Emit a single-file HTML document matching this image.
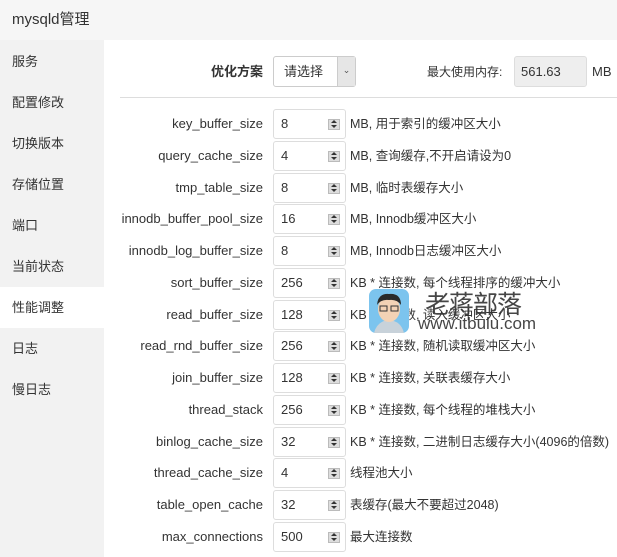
<!DOCTYPE html>
<html><head><meta charset="utf-8"><style>
*{margin:0;padding:0;box-sizing:border-box}
body{width:617px;height:557px;overflow:hidden;background:#fff;font-family:"Liberation Sans","Noto Sans CJK SC",sans-serif;color:#333;position:relative;line-height:16px}
.hdr{position:absolute;left:0;top:0;width:617px;height:40px;background:#f6f6f6;font-size:15px;padding:11px 0 0 12px;color:#333;line-height:18px}
.side{position:absolute;left:0;top:40px;width:104px;height:517px;background:#f2f2f2}
.side div{position:absolute;left:12px;font-size:13px;color:#333}
.act{position:absolute;left:0;top:287px;width:104px;height:41px;background:#fff}
.lbl{position:absolute;right:354px;font-size:13px;color:#333;white-space:nowrap;height:16px;line-height:16px}
.inp{position:absolute;left:273px;width:73px;height:30px;border:1px solid #ddd;border-radius:3px;background:#fff;font-size:13px;padding:0 0 0 7px;line-height:28px}
.sp{position:absolute;right:5px;top:9px;width:12px;height:11px;background:#ddd;border:1px solid #bbb}
.sp:before{content:"";position:absolute;left:2px;top:0px;border:3px solid transparent;border-bottom:3px solid #333;border-top:0}
.sp:after{content:"";position:absolute;left:2px;top:5px;border:3px solid transparent;border-top:3px solid #333;border-bottom:0}
.d{position:absolute;left:350px;font-size:12.5px;color:#333;white-space:nowrap;height:16px;line-height:16px}
</style></head><body>
<div class="hdr">mysqld管理</div>
<div class="side">
<div style="top:14px">服务</div>
<div style="top:55px">配置修改</div>
<div style="top:96px">切换版本</div>
<div style="top:137px">存储位置</div>
<div style="top:178px">端口</div>
<div style="top:219px">当前状态</div>
</div>
<div class="act"></div>
<div style="position:absolute;left:12px;top:300px;font-size:13px">性能调整</div>
<div style="position:absolute;left:12px;top:341px;font-size:13px">日志</div>
<div style="position:absolute;left:12px;top:382px;font-size:13px">慢日志</div>

<div class="lbl" style="top:64px;font-weight:bold">优化方案</div>
<div style="position:absolute;left:273px;top:56px;width:83px;height:31px;border:1px solid #ccc;border-radius:3px;font-size:13px;padding:0 0 0 10px;line-height:29px;background:#fff">请选择
<div style="position:absolute;right:0;top:0;width:18px;height:29px;background:#e6e6e6;border-left:1px solid #ccc;font-size:9px;text-align:center;line-height:26px;color:#555">&#8964;</div></div>
<div style="position:absolute;left:427px;top:64px;font-size:12px">最大使用内存:</div>
<div style="position:absolute;left:514px;top:56px;width:73px;height:31px;border:1px solid #ddd;border-radius:3px;background:#eee;font-size:13px;padding:0 0 0 6px;line-height:29px">561.63</div>
<div style="position:absolute;left:592px;top:64px;font-size:13px">MB</div>
<div style="position:absolute;left:120px;top:97px;width:497px;height:1px;background:#ddd"></div>

<div class="lbl" style="top:116px">key_buffer_size</div><div class="inp" style="top:109px">8<div class="sp"></div></div><div class="d" style="top:116px">MB, 用于索引的缓冲区大小</div>
<div class="lbl" style="top:148px">query_cache_size</div><div class="inp" style="top:141px">4<div class="sp"></div></div><div class="d" style="top:148px">MB, 查询缓存,不开启请设为0</div>
<div class="lbl" style="top:180px">tmp_table_size</div><div class="inp" style="top:173px">8<div class="sp"></div></div><div class="d" style="top:180px">MB, 临时表缓存大小</div>
<div class="lbl" style="top:211px">innodb_buffer_pool_size</div><div class="inp" style="top:204px">16<div class="sp"></div></div><div class="d" style="top:211px">MB, Innodb缓冲区大小</div>
<div class="lbl" style="top:243px">innodb_log_buffer_size</div><div class="inp" style="top:236px">8<div class="sp"></div></div><div class="d" style="top:243px">MB, Innodb日志缓冲区大小</div>
<div class="lbl" style="top:275px">sort_buffer_size</div><div class="inp" style="top:268px">256<div class="sp"></div></div><div class="d" style="top:275px">KB * 连接数, 每个线程排序的缓冲大小</div>
<div class="lbl" style="top:307px">read_buffer_size</div><div class="inp" style="top:300px">128<div class="sp"></div></div><div class="d" style="top:307px">KB * 连接数, 读入缓冲区大小</div>
<div class="lbl" style="top:338px">read_rnd_buffer_size</div><div class="inp" style="top:331px">256<div class="sp"></div></div><div class="d" style="top:338px">KB * 连接数, 随机读取缓冲区大小</div>
<div class="lbl" style="top:370px">join_buffer_size</div><div class="inp" style="top:363px">128<div class="sp"></div></div><div class="d" style="top:370px">KB * 连接数, 关联表缓存大小</div>
<div class="lbl" style="top:402px">thread_stack</div><div class="inp" style="top:395px">256<div class="sp"></div></div><div class="d" style="top:402px">KB * 连接数, 每个线程的堆栈大小</div>
<div class="lbl" style="top:434px">binlog_cache_size</div><div class="inp" style="top:427px">32<div class="sp"></div></div><div class="d" style="top:434px">KB * 连接数, 二进制日志缓存大小(4096的倍数)</div>
<div class="lbl" style="top:465px">thread_cache_size</div><div class="inp" style="top:458px">4<div class="sp"></div></div><div class="d" style="top:465px">线程池大小</div>
<div class="lbl" style="top:497px">table_open_cache</div><div class="inp" style="top:490px">32<div class="sp"></div></div><div class="d" style="top:497px">表缓存(最大不要超过2048)</div>
<div class="lbl" style="top:529px">max_connections</div><div class="inp" style="top:522px">500<div class="sp"></div></div><div class="d" style="top:529px">最大连接数</div>

<svg style="position:absolute;left:369px;top:289px" width="40" height="44" viewBox="0 0 40 44">
<rect x="0" y="0" width="40" height="44" rx="7" fill="#7cc4ee"/>
<path d="M5 44 Q8 32 20 31 Q32 32 35 44Z" fill="#c8d2da"/>
<ellipse cx="20" cy="20" rx="11" ry="13" fill="#f3d2b5"/>
<path d="M8 16 Q9 4 20 5 Q32 4 32 16 Q28 10 20 11 Q12 10 8 16Z" fill="#2a2a2a"/>
<rect x="11" y="17" width="7" height="5" fill="none" stroke="#333" stroke-width="1"/>
<rect x="22" y="17" width="7" height="5" fill="none" stroke="#333" stroke-width="1"/>
</svg>
<div style="position:absolute;left:425px;top:288px;font-size:25px;color:#333;font-family:'Noto Sans CJK SC',sans-serif;line-height:30px;letter-spacing:-1px;opacity:.9">老蒋部落</div>
<div style="position:absolute;left:418px;top:315px;font-size:17px;color:#333;line-height:18px;opacity:.9">www.itbulu.com</div>
</body></html>
